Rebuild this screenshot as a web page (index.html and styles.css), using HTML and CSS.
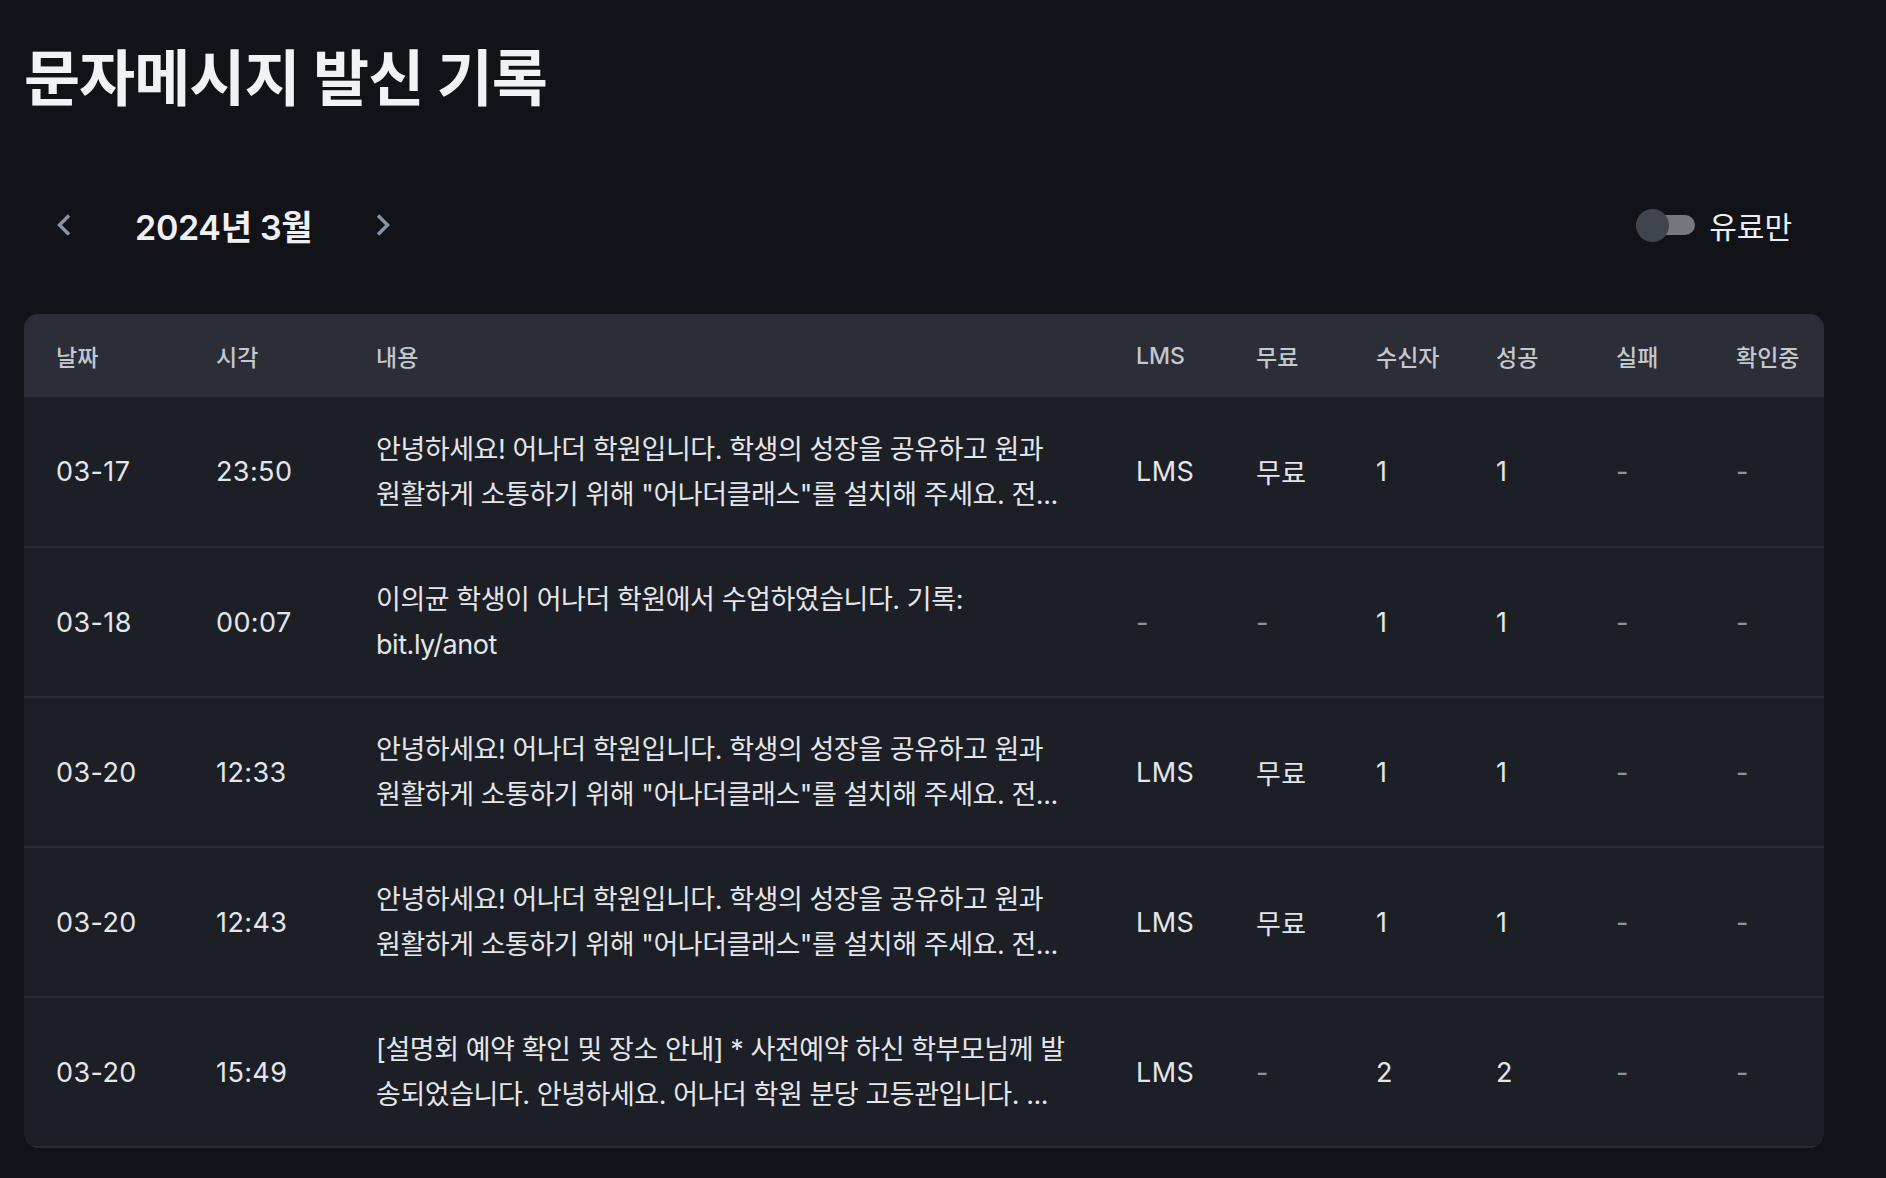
FILE: index.html
```html
<!DOCTYPE html>
<html lang="ko">
<head>
<meta charset="utf-8">
<title>문자메시지 발신 기록</title>
<link rel="stylesheet" href="styles.css">
</head>
<body>
<div class="page">
  <h1 class="title">문자메시지 발신 기록</h1>

  <div class="nav">
    <div class="month-nav">
      <button class="chev" aria-label="이전 달">
        <svg width="16" height="24" viewBox="0 0 16 24"><polyline points="13,2.5 3.5,12 13,21.5" fill="none" stroke="currentColor" stroke-width="3.4" stroke-linejoin="miter" stroke-linecap="butt"/></svg>
      </button>
      <span class="month">2024년 3월</span>
      <button class="chev" aria-label="다음 달">
        <svg width="16" height="24" viewBox="0 0 16 24"><polyline points="3,2.5 12.5,12 3,21.5" fill="none" stroke="currentColor" stroke-width="3.4" stroke-linejoin="miter" stroke-linecap="butt"/></svg>
      </button>
    </div>
    <label class="toggle">
      <span class="switch"><span class="knob"></span></span>
      <span class="toggle-label">유료만</span>
    </label>
  </div>

  <div class="table-wrap">
    <table class="log">
      <colgroup>
        <col class="c-date"><col class="c-time"><col class="c-body">
        <col class="c-num"><col class="c-num"><col class="c-num"><col class="c-num"><col class="c-num"><col class="c-num">
      </colgroup>
      <thead>
        <tr>
          <th>날짜</th><th>시각</th><th>내용</th><th>LMS</th><th>무료</th><th>수신자</th><th>성공</th><th>실패</th><th>확인중</th>
        </tr>
      </thead>
      <tbody>
        <tr>
          <td>03-17</td><td>23:50</td>
          <td class="msg"><span class="line">안녕하세요! 어나더 학원입니다. 학생의 성장을 공유하고 원과</span><span class="line">원활하게 소통하기 위해 "어나더클래스"를 설치해 주세요. 전...</span></td>
          <td>LMS</td><td>무료</td><td>1</td><td>1</td><td class="dim">-</td><td class="dim">-</td>
        </tr>
        <tr>
          <td>03-18</td><td>00:07</td>
          <td class="msg"><span class="line">이의균 학생이 어나더 학원에서 수업하였습니다. 기록:</span><span class="line">bit.ly/anot</span></td>
          <td class="dim">-</td><td class="dim">-</td><td>1</td><td>1</td><td class="dim">-</td><td class="dim">-</td>
        </tr>
        <tr>
          <td>03-20</td><td>12:33</td>
          <td class="msg"><span class="line">안녕하세요! 어나더 학원입니다. 학생의 성장을 공유하고 원과</span><span class="line">원활하게 소통하기 위해 "어나더클래스"를 설치해 주세요. 전...</span></td>
          <td>LMS</td><td>무료</td><td>1</td><td>1</td><td class="dim">-</td><td class="dim">-</td>
        </tr>
        <tr>
          <td>03-20</td><td>12:43</td>
          <td class="msg"><span class="line">안녕하세요! 어나더 학원입니다. 학생의 성장을 공유하고 원과</span><span class="line">원활하게 소통하기 위해 "어나더클래스"를 설치해 주세요. 전...</span></td>
          <td>LMS</td><td>무료</td><td>1</td><td>1</td><td class="dim">-</td><td class="dim">-</td>
        </tr>
        <tr>
          <td>03-20</td><td>15:49</td>
          <td class="msg"><span class="line">[설명회 예약 확인 및 장소 안내] * 사전예약 하신 학부모님께 발</span><span class="line">송되었습니다. 안녕하세요. 어나더 학원 분당 고등관입니다. ...</span></td>
          <td>LMS</td><td class="dim">-</td><td>2</td><td>2</td><td class="dim">-</td><td class="dim">-</td>
        </tr>
      </tbody>
    </table>
  </div>
</div>
</body>
</html>
```

FILE: styles.css
```css
* { box-sizing: border-box; }

html, body {
  margin: 0;
  padding: 0;
  background: #121318;
  color: #e6e7eb;
  font-family: Inter, "Noto Sans CJK KR", sans-serif;
}

.page {
  width: 1848px;
  padding: 40px 24px 0 24px;
}

.title {
  margin: 0;
  font-size: 61px;
  line-height: 78px;
  font-weight: 700;
  color: #f0f2f6;
  letter-spacing: -1px;
}

.nav {
  width: 1800px;
  height: 72px;
  margin-top: 71px;
  padding: 0 32px;
  display: flex;
  align-items: center;
  justify-content: space-between;
}

.month-nav {
  display: flex;
  align-items: center;
  gap: 63px;
}

.chev {
  display: flex;
  align-items: center;
  justify-content: center;
  width: 16px;
  height: 24px;
  padding: 0;
  border: 0;
  background: none;
  color: #8a93a4;
  cursor: pointer;
}

.month {
  font-size: 34px;
  font-weight: 600;
  color: #eef0f4;
  letter-spacing: -0.3px;
}

.toggle {
  display: flex;
  align-items: center;
  gap: 14px;
}

.switch {
  position: relative;
  width: 59px;
  height: 20px;
  border-radius: 10px;
  background: #77787d;
}

.knob {
  position: absolute;
  left: 0;
  top: -6px;
  width: 33px;
  height: 33px;
  border-radius: 50%;
  background: #40444c;
}

.toggle-label {
  font-size: 30px;
  color: #eceef2;
}

.table-wrap {
  width: 1800px;
  margin-top: 53px;
  border-radius: 14px;
  overflow: hidden;
  background: #1d1f26;
}

.log {
  width: 1800px;
  table-layout: fixed;
  border-collapse: collapse;
}

.c-date { width: 160px; }
.c-time { width: 160px; }
.c-body { width: 760px; }
.c-num { width: 120px; }

.log thead tr {
  background: #2b2e37;
}

.log th {
  height: 83px;
  padding: 0 32px;
  text-align: left;
  font-size: 23px;
  font-weight: 500;
  color: #c4c7ce;
  vertical-align: middle;
  white-space: nowrap;
}

.log td {
  height: 150px;
  padding: 0 32px;
  font-size: 27px;
  font-weight: 400;
  color: #e4e6ea;
  vertical-align: middle;
  border-bottom: 2px solid #2a2c33;
  white-space: nowrap;
  letter-spacing: 0.4px;
}

.log td.msg {
  padding-right: 20px;
  letter-spacing: 0;
}

.line {
  display: block;
  font-size: 27px;
  line-height: 45px;
  white-space: nowrap;
  overflow: hidden;
  letter-spacing: -0.45px;
}

.log td.dim {
  color: #8f929a;
}
```
